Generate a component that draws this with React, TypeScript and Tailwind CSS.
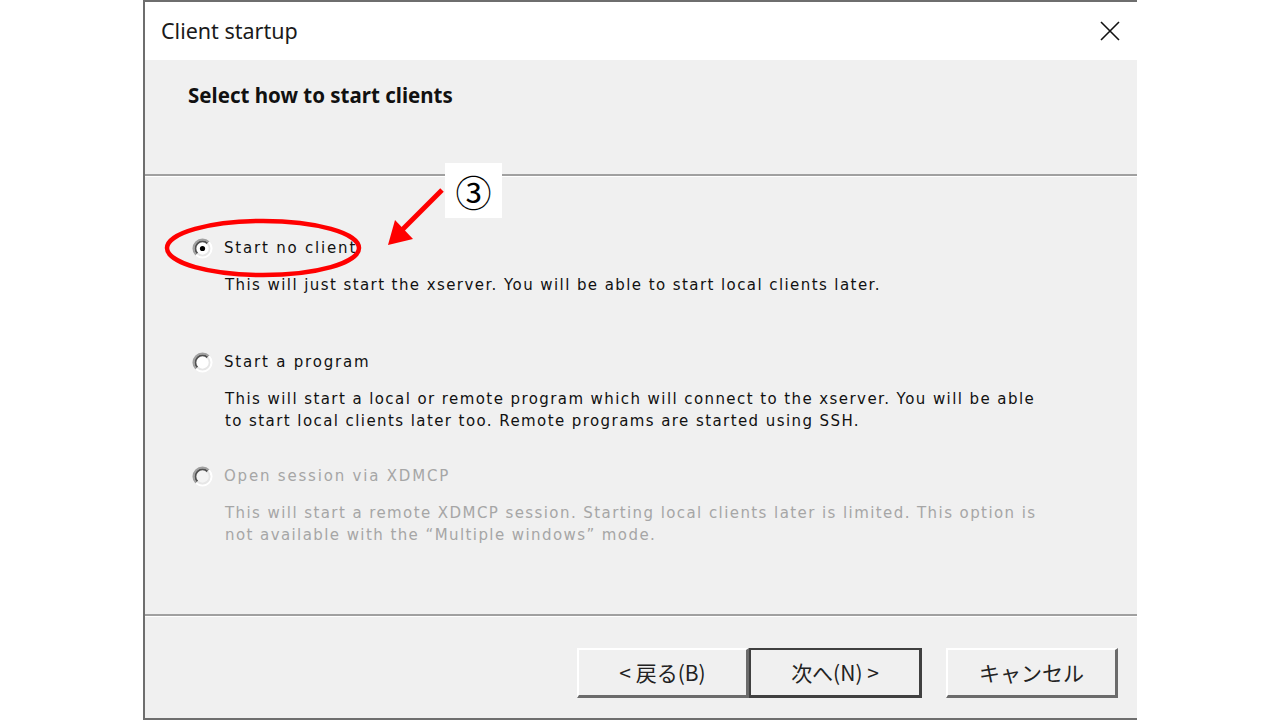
import React from "react";

const bodyFont = { fontFamily: '"DejaVu Sans", "Liberation Sans", sans-serif' };
const uiFont = { fontFamily: '"Noto Sans", "Noto Sans CJK JP", sans-serif' };
const jpFont = { fontFamily: '"Noto Sans CJK JP", "Noto Sans", sans-serif' };

function Radio({ checked, disabled }: { checked?: boolean; disabled?: boolean }) {
  return (
    <svg width="21" height="21" viewBox="0 0 21 21" className="shrink-0">
      <circle cx="10.5" cy="10.5" r="9" fill={disabled ? "#f4f4f4" : "#ffffff"} />
      <path d="M4.1 16.9 A9 9 0 0 1 16.9 4.1" fill="none" stroke="#a0a0a0" strokeWidth="2" />
      <path d="M5.5 15.5 A7 7 0 0 1 15.5 5.5" fill="none" stroke="#505050" strokeWidth="1.8" />
      <path d="M16.9 4.1 A9 9 0 0 1 4.1 16.9" fill="none" stroke="#ffffff" strokeWidth="2" />
      <path d="M15.5 5.5 A7 7 0 0 1 5.5 15.5" fill="none" stroke="#e6e6e6" strokeWidth="1.8" />
      {checked && <circle cx="10.5" cy="10.5" r="2.6" fill="#000" />}
    </svg>
  );
}

function Option({
  label,
  desc,
  checked,
  disabled,
}: {
  label: string;
  desc: string[];
  checked?: boolean;
  disabled?: boolean;
}) {
  const color = disabled ? "text-[#a6a6a6]" : "text-[#111111]";
  return (
    <div className="h-[114px] flex flex-col">
      <div className="flex items-center h-[22px]">
        <div className="w-[32px] flex -ml-[1px]">
          <Radio checked={checked} disabled={disabled} />
        </div>
        <span className={`text-[15px] leading-[22px] tracking-[1.8px] ${color}`} style={bodyFont}>
          {label}
        </span>
      </div>
      <div className="mt-[15px] pl-[32px]">
        {desc.map((d, i) => (
          <div key={i} className={`text-[15px] leading-[22px] tracking-[1.42px] whitespace-nowrap ${color}`} style={bodyFont}>
            {d}
          </div>
        ))}
      </div>
    </div>
  );
}

function Btn({ children, def }: { children: React.ReactNode; def?: boolean }) {
  return (
    <div
      className={
        def
          ? "w-[173px] h-[50px] border-2 border-[#404040] border-r-[3px] border-b-[3px] bg-[#f0f0f0] flex items-center justify-center"
          : "w-[172px] h-[50px] border-t-2 border-l-2 border-white border-r-[3px] border-b-[3px] border-r-[#6b6b6b] border-b-[#6b6b6b] bg-[#f0f0f0] flex items-center justify-center"
      }
    >
      <span className="text-[21px] text-[#222]" style={jpFont}>
        {children}
      </span>
    </div>
  );
}

export default function App() {
  return (
    <div className="w-[1280px] h-[720px] bg-white relative overflow-hidden">
      <div className="ml-[143px] w-[994px] h-[720px] border-l-2 border-t-2 border-b-2 border-[#6e6e6e] flex flex-col">
        {/* title bar */}
        <div className="h-[58px] bg-white flex items-center justify-between pl-[16px] pr-[16px]">
          <span className="text-[21.5px] text-[#1a1a1a]" style={uiFont}>
            Client startup
          </span>
          <svg width="22" height="22" viewBox="0 0 22 22">
            <path d="M2 2 L20 20 M20 2 L2 20" stroke="#111" strokeWidth="1.6" />
          </svg>
        </div>
        {/* header */}
        <div className="h-[114px] bg-[#f0f0f0] pl-[43px] pt-[20px]">
          <span className="text-[20.5px] font-bold text-[#111]" style={uiFont}>
            Select how to start clients
          </span>
        </div>
        <div className="h-[2px] bg-[#a0a0a0]" />
        <div className="h-[1px] bg-white" />
        {/* body */}
        <div className="flex-1 bg-[#f0f0f0] pl-[48px] pt-[60px]">
          <Option
            checked
            label="Start no client"
            desc={["This will just start the xserver. You will be able to start local clients later."]}
          />
          <Option
            label="Start a program"
            desc={[
              "This will start a local or remote program which will connect to the xserver. You will be able",
              "to start local clients later too. Remote programs are started using SSH.",
            ]}
          />
          <Option
            disabled
            label="Open session via XDMCP"
            desc={[
              "This will start a remote XDMCP session. Starting local clients later is limited. This option is",
              "not available with the \u201cMultiple windows\u201d mode.",
            ]}
          />
        </div>
        <div className="h-[2px] bg-[#a0a0a0]" />
        <div className="h-[1px] bg-white" />
        {/* footer */}
        <div className="h-[101px] bg-[#f0f0f0] flex items-start justify-end pt-[31px] pr-[19px]">
          <Btn>{"< 戻る(B)"}</Btn>
          <Btn def>{"次へ(N) >"}</Btn>
          <div className="w-[24px]" />
          <Btn>キャンセル</Btn>
        </div>
      </div>

      {/* annotation overlay */}
      <svg className="absolute left-0 top-0 pointer-events-none" width="1280" height="720">
        <ellipse cx="263" cy="248" rx="96" ry="27" fill="none" stroke="#ff0000" strokeWidth="4.5" />
        <line x1="442" y1="190" x2="402" y2="230" stroke="#ff0000" strokeWidth="5" />
        <polygon points="388,245 395,220 413,239" fill="#ff0000" />
      </svg>
      <div className="absolute left-[445px] top-[163px] w-[57px] h-[55px] bg-white flex items-center justify-center">
        <span className="text-[36px] leading-none text-black" style={jpFont}>
          ③
        </span>
      </div>
    </div>
  );
}
